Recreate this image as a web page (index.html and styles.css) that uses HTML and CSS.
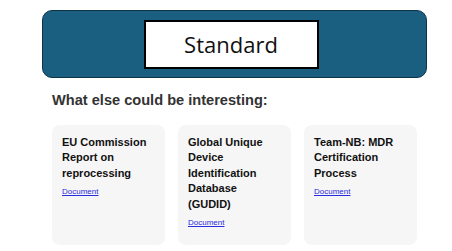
FILE: index.html
```html
<!DOCTYPE html>
<html lang="en">
<head>
	<meta charset="UTF-8">
	<meta name="viewport" content="width=device-width, initial-scale=1.0">
	<title>Standard</title>
	<link rel="stylesheet" href="styles.css">
</head>
<body>
	<div class="page">
		<div class="banner">
			<div class="banner-label">Standard</div>
		</div>

		<div class="related">
			<h2>What else could be interesting:</h2>
			<div class="cards">
				<div class="card">
					<h3>EU Commission Report on reprocessing</h3>
					<a href="#">Document</a>
				</div>
				<div class="card">
					<h3>Global Unique Device Identification Database (GUDID)</h3>
					<a href="#">Document</a>
				</div>
				<div class="card">
					<h3>Team-NB: MDR Certification Process</h3>
					<a href="#">Document</a>
				</div>
			</div>
		</div>
	</div>
</body>
</html>
```

FILE: styles.css
```css
	body {
		margin: 0;
		font-family: 'Liberation Sans', Arial, sans-serif;
		background-color: #fff;}

	.page {
		width: 385px;
		margin: 0 0 0 42px;
		padding-top: 10px;}

	.banner {
		height: 66px;
		background-color: #1a5f80;
		border: 1.5px solid #0e3448;
		border-radius: 10px;
		display: flex;
		align-items: center;
		justify-content: center;}
	.banner-label {
		width: 171px;
		height: 45px;
		margin-left: -7px;
		background-color: #fff;
		border: 2px solid #000;
		display: flex;
		align-items: center;
		justify-content: center;
		font-family: 'Open Sans', sans-serif;
		font-size: 22px;
		color: #111;}

	.related {
		padding: 0 10px;}
	h2 {
		margin: 14px 0 17px;
		font-size: 14.6px;
		color: #333;}
	.cards {
		display: grid;
		grid-template-columns: 1fr 1fr 1fr;
		gap: 13px;}
	.card {
		height: 100px;
		padding: 10px 10px 10px;
		background-color: #f6f6f6;
		border-radius: 8px;}
	h3 {
		margin: 0 0 6px;
		font-size: 11px;
		line-height: 15.4px;
		color: #111;}
	.card a {
		display: block;
		font-size: 8px;
		line-height: 9px;
		color: #2a2ae0;}
```
